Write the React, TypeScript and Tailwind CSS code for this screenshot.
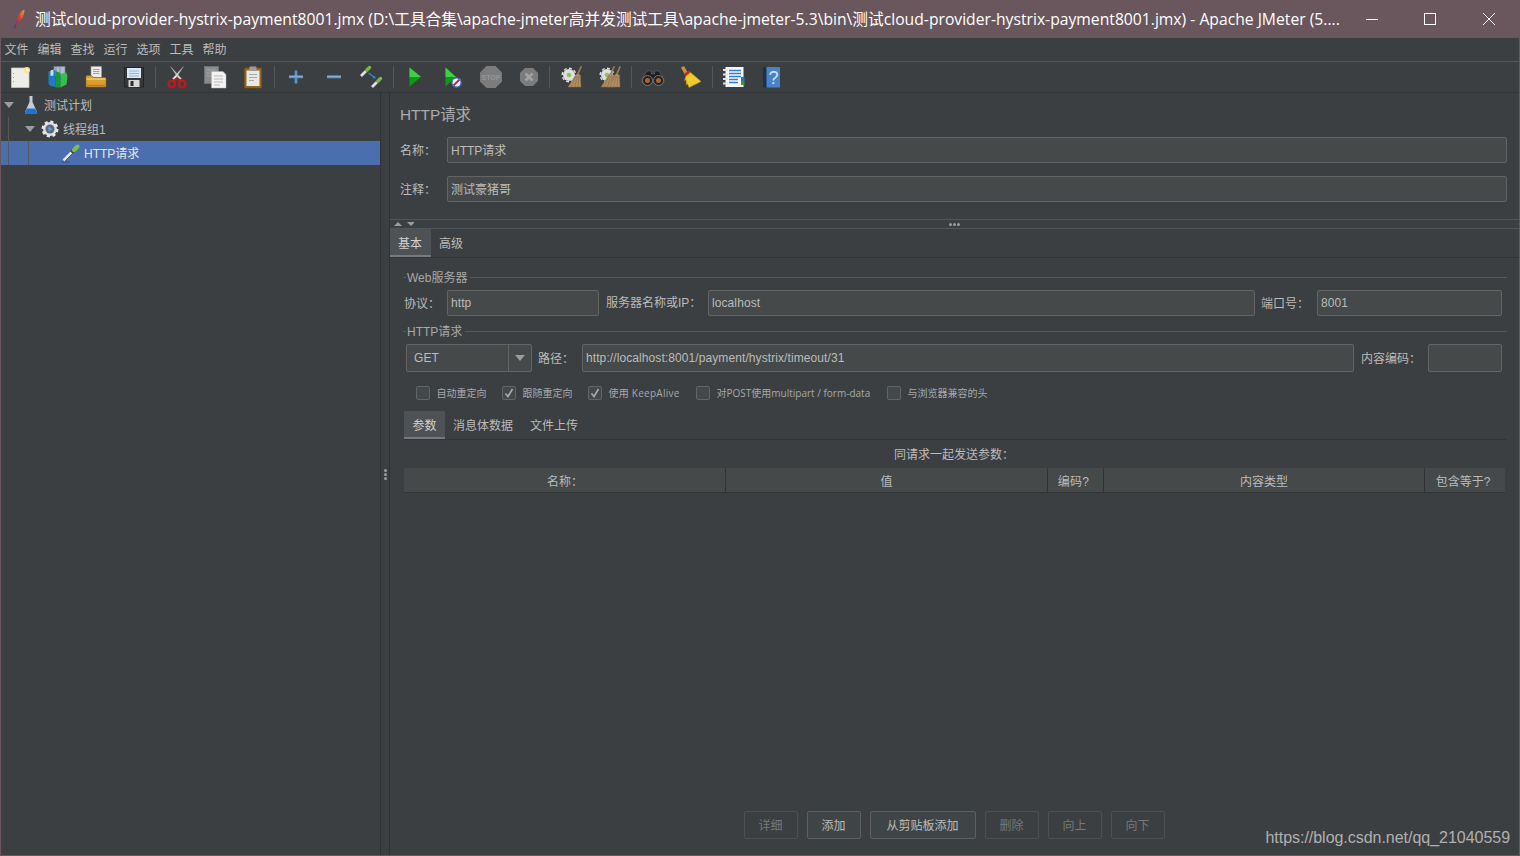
import React from "react";

const FONT = "font-['Liberation_Sans','Noto_Sans_CJK_SC',sans-serif]";

function Sep({ ml = "" }: { ml?: string }) {
  return <div className={`w-px h-[22px] shrink-0 bg-[#55595b] ${ml}`} />;
}

function Tb({ w, children }: { w: number; children: React.ReactNode }) {
  return (
    <div className="flex items-center justify-center h-full shrink-0" style={{ width: w }}>
      {children}
    </div>
  );
}

const S = ({ children }: { children: React.ReactNode }) => (
  <svg width="24" height="24" viewBox="0 0 24 24">{children}</svg>
);

const IconNew = () => (
  <S>
    <path d="M3.500 3h15.500l2 2v17.500H3.500z" fill="#efeee6" stroke="#c9c6ba" strokeWidth=".8" />
    <circle cx="19" cy="5" r="3" fill="#f7e38a" />
    <circle cx="19" cy="5" r="1.500" fill="#fff6c4" />
    <path d="M5.500 8v.8M5.500 12v.8M5.500 16v.8" stroke="#8c8c8c" />
  </S>
);
const IconTemplates = () => (
  <S>
    <rect x="8" y="1.500" width="11" height="9" fill="#aebdc8" stroke="#6d8090" strokeWidth=".7" />
    <path d="M10 1.500v9M14 1.500v9" stroke="#6d8090" strokeWidth=".7" />
    <path d="M2.500 6.500l7-1.500v17l-5-1-2-2z" fill="#1c7cc4" />
    <path d="M4.500 5.500l3-1v6l-3 .5z" fill="#cfdbe3" />
    <path d="M9.500 6l5 2v14.500h-5z" fill="#169a3c" />
    <path d="M14.500 9l6-1.500q1.500 3 .5 8l-.5 4-6 3z" fill="#34bf4e" />
  </S>
);
const IconOpen = () => (
  <S>
    <path d="M7 1.500h10.500v11H7z" fill="#ececec" stroke="#a0a0a0" strokeWidth=".6" />
    <path d="M9 4.500h6.500M9 6.500h6.500M9 8.500h6.500" stroke="#a2a2a2" />
    <path d="M2 11.500q0-1 1-1h4.500l2 2H21q1 0 1 1v7.500a1 1 0 01-1 1H3a1 1 0 01-1-1z" fill="#dc9d2f" stroke="#8f6414" strokeWidth=".6" />
    <path d="M2.500 14h19" stroke="#f4ce74" strokeWidth="1.400" />
    <path d="M3 20.500h18" stroke="#b97f1e" strokeWidth="1.400" />
  </S>
);
const IconSave = () => (
  <S>
    <path d="M2.500 2.500h19v19.500H2.500z" fill="#35383b" stroke="#1e1e1e" strokeWidth=".8" />
    <rect x="5" y="3" width="14" height="10" fill="#dbe8f5" />
    <path d="M7 6h10M7 8.500h10M7 11h10" stroke="#93b5d8" />
    <rect x="6.500" y="15" width="11" height="7" fill="#d7d7d7" />
    <rect x="8.500" y="16" width="3" height="5" fill="#2e2e2e" />
  </S>
);
const IconCut = () => (
  <S>
    <path d="M5.500 1.500l9 13.500 2-1.500z" fill="#dadada" stroke="#8f8f8f" strokeWidth=".5" />
    <path d="M18.500 1.500l-9 13.500-2-1.500z" fill="#ededed" stroke="#8f8f8f" strokeWidth=".5" />
    <circle cx="6.800" cy="19" r="3.300" fill="none" stroke="#cc1616" strokeWidth="2.200" />
    <circle cx="17.200" cy="19" r="3.300" fill="none" stroke="#cc1616" strokeWidth="2.200" />
    <path d="M8.500 16.500l2.500-3M15.500 16.500l-2.500-3" stroke="#cc1616" strokeWidth="2" />
  </S>
);
const IconCopy = () => (
  <S>
    <rect x="1.500" y="1.500" width="14" height="17" fill="#8a8c8c" stroke="#767878" strokeWidth=".7" />
    <path d="M3.500 5h10M3.500 8h10M3.500 11h10" stroke="#a2a4a4" />
    <path d="M8.500 6.500H20l3 3V23H8.500z" fill="#f3f3f3" stroke="#b0b0b0" strokeWidth=".5" />
    <path d="M11 11h9M11 14h9M11 17h9M11 20h6" stroke="#b9b9b9" />
  </S>
);
const IconPaste = () => (
  <S>
    <rect x="3.500" y="3" width="17" height="20" rx="1" fill="#96661f" stroke="#7a5216" strokeWidth=".6" />
    <rect x="5.500" y="5.500" width="13" height="15.500" fill="#e9e9e3" />
    <rect x="8.500" y="1.500" width="7" height="4.500" rx="1" fill="#9b9b9b" />
    <path d="M8 9.500h8M8 12.500h8M8 15.500h5" stroke="#a9a9a9" />
  </S>
);
const IconPlus = () => (
  <S>
    <path d="M12 5.500v13M5 12h14" stroke="#5b95d0" strokeWidth="2.600" />
    <path d="M5 11.200h14" stroke="#a3c6ea" strokeWidth=".8" />
  </S>
);
const IconMinus = () => (
  <S>
    <path d="M5 12h14" stroke="#5b95d0" strokeWidth="2.600" />
    <path d="M5 11.200h14" stroke="#a3c6ea" strokeWidth=".8" />
  </S>
);
const Dropper = ({ x, y }: { x: number; y: number }) => (
  <g transform={`translate(${x} ${y})`}>
    <path d="M0 10l5-5" stroke="#e2e2e2" strokeWidth="2.600" />
    <path d="M5 5l1-1" stroke="#5f5f5f" strokeWidth="3" />
    <path d="M6 4l2.500-2.500" stroke="#78b84c" strokeWidth="3.400" strokeLinecap="round" />
  </g>
);
const IconToggle = () => (
  <S>
    <Dropper x={1} y={1} />
    <Dropper x={12} y={12} />
    <path d="M8.500 8l6 4.500" stroke="#3b84cc" strokeWidth="1.400" />
    <path d="M16 13.500l-3.500-.2 2-2.600z" fill="#3b84cc" />
  </S>
);
const IconPlay = () => (
  <S>
    <path d="M6.500 2.500L18 12 6.500 21.500z" fill="#0e9a12" />
    <path d="M6.500 2.500L18 12H6.500z" fill="#3fd043" />
  </S>
);
const IconPlayNo = () => (
  <S>
    <path d="M4.500 2.500L15 12 4.500 21.500z" fill="#0e9a12" />
    <path d="M4.500 2.500L15 12H4.500z" fill="#3fd043" />
    <circle cx="15.500" cy="17.500" r="4.600" fill="#e8eef8" stroke="#3b6fc4" strokeWidth="1.200" />
    <path d="M12.500 20.500l6-6" stroke="#d42020" strokeWidth="1.800" />
  </S>
);
const IconStop = () => (
  <S>
    <path d="M7.500 1h9L23 7.500v9L16.500 23h-9L1 16.500v-9z" fill="#7c7c7c" />
    <text x="12" y="15" textAnchor="middle" fontSize="8" fontWeight="700" textLength="19" lengthAdjust="spacingAndGlyphs" fill="#969696" fontFamily="Liberation Sans">STOP</text>
  </S>
);
const IconShut = () => (
  <S>
    <path d="M8 3h8l5 5v8l-5 5H8l-5-5V8z" fill="#7c7c7c" />
    <path d="M8.500 8.500l7 7M15.500 8.500l-7 7" stroke="#a2a2a2" strokeWidth="2.800" />
  </S>
);
const Gear = ({ cx, cy }: { cx: number; cy: number }) => (
  <g>
    <circle cx={cx} cy={cy} r="6" fill="#dedede" />
    <circle cx={cx} cy={cy} r="6.800" fill="none" stroke="#dedede" strokeWidth="1.400" strokeDasharray="3 2.300" />
    <circle cx={cx} cy={cy} r="2.300" fill="#86c850" />
  </g>
);
const Brush = ({ x, y = 0 }: { x: number; y?: number }) => (
  <g transform={`translate(${x} ${y})`}>
    <path d="M12.500 1l1.500.6-3.500 8-1.500-.6z" fill="#a07c50" />
    <path d="M9 8.500l3.500 1.500.5 12H0z" fill="#b28e64" stroke="#866844" strokeWidth=".5" />
    <path d="M8 11l-5 11M9.500 11l-3 11M11 11l-1 11" stroke="#8a6a44" strokeWidth=".6" />
  </g>
);
const IconClear = () => (
  <S>
    <Gear cx={10} cy={10} />
    <Brush x={9} />
  </S>
);
const IconClearAll = () => (
  <S>
    <Gear cx={9} cy={10} />
    <Brush x={3} />
    <Brush x={9} />
  </S>
);
const IconBinoc = () => (
  <S>
    <path d="M6 6h4.500v3h3V6H18l5 8.500v3H1v-3z" fill="#1e1e1e" stroke="#777" strokeWidth=".5" />
    <circle cx="6.500" cy="15.500" r="5" fill="#222" stroke="#8c8c8c" strokeWidth=".8" />
    <circle cx="17.500" cy="15.500" r="5" fill="#222" stroke="#8c8c8c" strokeWidth=".8" />
    <circle cx="6.500" cy="15.500" r="2.500" fill="#ad6430" />
    <circle cx="17.500" cy="15.500" r="2.500" fill="#ad6430" />
  </S>
);
const IconBroom = () => (
  <S>
    <path d="M2 2.500l3-1.500 4 7-3 2z" fill="#c99338" />
    <path d="M5.500 8.500l4.500-3 1.500 2-4.500 3.200z" fill="#d42020" />
    <path d="M7 11l4.500-3.500 10.500 9-12 6-1.500-4-1 1.500-.5-5.500-1.500 1z" fill="#f0cd2c" stroke="#bf9a18" strokeWidth=".6" />
  </S>
);
const IconFunc = () => (
  <S>
    <rect x="3.500" y="2" width="18" height="20" fill="#fafafa" />
    <path d="M7 5.500h12M7 8.500h12M7 11.500h12M7 14.500h9M7 17.500h9" stroke="#2f7fe0" strokeWidth="1.300" />
    <path d="M1 5h5M1 9.500h5M1 14h5M1 18.500h5" stroke="#e2e2e2" strokeWidth="2" />
    <rect x="19" y="12" width="3.500" height="4" fill="#3070c0" />
    <rect x="19" y="16" width="3.500" height="4" fill="#3a9a3a" />
  </S>
);
const IconHelp = () => (
  <S>
    <rect x="3" y="2" width="5" height="20.500" rx="1" fill="#1d3144" />
    <rect x="6.500" y="2" width="13.500" height="20.500" fill="#4a82c8" />
    <text x="13.500" y="18.500" textAnchor="middle" fontSize="18" fill="#d5e4f6" fontFamily="Liberation Sans">?</text>
  </S>
);

const Arrow = () => (
  <svg width="10" height="6" viewBox="0 0 10 6"><path d="M0 0h10L5 6z" fill="#9a9c9e" /></svg>
);

const Flask = () => (
  <svg width="16" height="20" viewBox="0 0 16 20">
    <path d="M6.500 1h3v6l4.500 10q.5 2-1.500 2h-9Q1.500 19 2 17l4.500-10z" fill="#c6cdd8" />
    <path d="M4.200 13.500h7.600l2.200 3.500q.5 2-1.500 2h-9Q1.500 19 2 17z" fill="#1c74d0" />
  </svg>
);
const TreeGear = () => (
  <svg width="20" height="20" viewBox="0 0 20 20">
    <circle cx="10" cy="10" r="7" fill="#dcdcdc" stroke="#e6e6e6" strokeWidth="3" strokeDasharray="3 2.500" />
    <circle cx="10" cy="10" r="4.500" fill="#5a6b80" />
    <path d="M8.500 7.500l4 2.500-4 2.500z" fill="#5aa0e8" />
  </svg>
);
const TreeDropper = () => (
  <svg width="20" height="20" viewBox="0 0 20 20">
    <path d="M1 19h8" stroke="#3d4f70" strokeWidth="1" />
    <path d="M2.500 17.500l8-8" stroke="#e4e4e4" strokeWidth="2.600" />
    <path d="M4 18l8-8" stroke="#555" strokeWidth=".8" />
    <path d="M10.500 9.500l2-2" stroke="#4a4a4a" strokeWidth="3.400" />
    <path d="M13 7l3.500-3.500" stroke="#7cc24a" strokeWidth="4" strokeLinecap="round" />
  </svg>
);

function Input({ className, value, cjk }: { className: string; value: string; cjk?: boolean }) {
  return (
    <div className={`flex items-center pl-[3px] bg-[#45494a] border border-[#646464] rounded-[2px] text-[12px] text-[#bbbbbb] ${cjk ? "pt-[2px]" : "tracking-[0.09px]"} ${className}`}>
      {value}
    </div>
  );
}

function Section({ title, className }: { title: string; className: string }) {
  return (
    <div className={`flex items-center gap-px text-[12px] text-[#a6a8aa] ${className}`}>
      <div className="w-[3px] h-px bg-[#55595b]" />
      <span className="pt-[2px]">{title}</span>
      <div className="flex-1 h-px bg-[#55595b] ml-[2px]" />
    </div>
  );
}

function Check({ label, checked, w, text = "" }: { label: string; checked?: boolean; w: string; text?: string }) {
  return (
    <div className={`flex items-center shrink-0 ${w}`}>
      <div className="w-[14px] h-[14px] mr-[6.5px] border border-[#646464] rounded-[2px] bg-[#43494a] flex items-center justify-center">
        {checked && (
          <svg width="10" height="10" viewBox="0 0 10 10"><path d="M1.500 5.500L4 8.500 8.500 1" stroke="#a9abad" strokeWidth="1.600" fill="none" /></svg>
        )}
      </div>
      <span className={`text-[10px] text-[#a6a8aa] whitespace-nowrap font-['Open_Sans','Noto_Sans_CJK_SC',sans-serif] ${text}`}>{label}</span>
    </div>
  );
}

function Btn({ label, w, on }: { label: string; w: string; on?: boolean }) {
  return (
    <div className={`h-[28px] flex items-center justify-center pt-[2px] pr-[1px] rounded-[2px] border text-[12px] ${w} ${on ? "border-[#5e6060] bg-[#3f4547] text-[#bbbbbb]" : "border-[#4d5052] text-[#777777]"}`}>
      {label}
    </div>
  );
}

function Th({ label, w, last }: { label: string; w: string; last?: boolean }) {
  return (
    <div className={`flex items-center justify-center h-full pt-[3px] text-[12px] text-[#bbbbbb] ${w} ${last ? "" : "border-r border-[#323232]"}`}>
      {label}
    </div>
  );
}

export default function App() {
  return (
    <div className={`w-[1520px] h-[856px] relative overflow-hidden flex flex-col bg-[#3c3f41] border-x border-b border-[#6a575d] ${FONT}`}>
      {/* Title bar */}
      <div className="h-[38px] shrink-0 bg-[#6a575d] flex items-center text-white font-['Open_Sans','Noto_Sans_CJK_SC',sans-serif] text-[15.7px] -mx-px">
        <svg className="ml-[13px] shrink-0" width="12" height="20" viewBox="0 0 12 20">
          <defs>
            <linearGradient id="fe" x1="1" y1="0" x2="0" y2="1">
              <stop offset="0" stopColor="#f0a030" />
              <stop offset=".45" stopColor="#d8402c" />
              <stop offset=".75" stopColor="#a02a70" />
              <stop offset="1" stopColor="#3c2a80" />
            </linearGradient>
          </defs>
          <path d="M11.500.5Q6 3 3.500 11L1 19.500h.8L5 13q4-2 5-5.500Q11.500 4 11.500.5z" fill="url(#fe)" />
        </svg>
        <span className="ml-[10px] pt-[2px] w-[1305px] shrink-0 whitespace-nowrap overflow-hidden">测试cloud-provider-hystrix-payment8001.jmx (D:\工具合集\apache-jmeter高并发测试工具\apache-jmeter-5.3\bin\测试cloud-provider-hystrix-payment8001.jmx) - Apache JMeter (5....</span>
        <div className="flex-1 flex items-center">
          <div className="ml-[26px] w-[12px] h-px bg-white" />
          <div className="ml-[46px] w-[12px] h-[12px] border border-white" />
          <svg className="ml-[47px]" width="12" height="12" viewBox="0 0 12 12"><path d="M0 0l12 12M12 0L0 12" stroke="#fff" /></svg>
        </div>
      </div>

      {/* Menu */}
      <div className="h-[24px] shrink-0 flex items-center gap-[9px] pl-[3.500px] text-[12px] text-[#bbbbbb] border-b border-[#515658]">
        {["文件", "编辑", "查找", "运行", "选项", "工具", "帮助"].map((m) => (
          <span key={m}>{m}</span>
        ))}
      </div>

      {/* Toolbar */}
      <div className="h-[31px] shrink-0 flex items-center border-b border-[#323537]">
        <Tb w={38}><IconNew /></Tb>
        <Tb w={37}><IconTemplates /></Tb>
        <Tb w={40}><IconOpen /></Tb>
        <Tb w={36}><IconSave /></Tb>
        <Sep ml="ml-[3px]" />
        <Tb w={42}><IconCut /></Tb>
        <Tb w={34}><IconCopy /></Tb>
        <Tb w={42}><IconPaste /></Tb>
        <Sep />
        <Tb w={42}><IconPlus /></Tb>
        <Tb w={34}><IconMinus /></Tb>
        <Tb w={42}><IconToggle /></Tb>
        <Sep />
        <Tb w={42}><IconPlay /></Tb>
        <Tb w={34}><IconPlayNo /></Tb>
        <Tb w={42}><IconStop /></Tb>
        <Tb w={34}><IconShut /></Tb>
        <Sep ml="ml-[3px]" />
        <Tb w={42}><IconClear /></Tb>
        <Tb w={36}><IconClearAll /></Tb>
        <Sep ml="ml-[3px]" />
        <Tb w={42}><IconBinoc /></Tb>
        <Tb w={34}><IconBroom /></Tb>
        <Sep ml="ml-[4px]" />
        <Tb w={42}><IconFunc /></Tb>
        <Tb w={34}><IconHelp /></Tb>
      </div>

      {/* Body */}
      <div className="flex-1 flex min-h-0">
        {/* Tree */}
        <div className="w-[379px] shrink-0 text-[12px] text-[#bbbbbb]">
          <div className="h-[24px] flex items-center">
            <div className="ml-[3px] w-[10px] flex"><Arrow /></div>
            <div className="ml-[9px] w-[16px] flex"><Flask /></div>
            <span className="ml-[5px] pt-[2px]">测试计划</span>
          </div>
          <div className="h-[24px] flex items-center">
            <div className="ml-[7px] w-px h-full bg-[#55595b]" />
            <div className="ml-[16px] w-[10px] flex"><Arrow /></div>
            <div className="ml-[5px] w-[20px] flex"><TreeGear /></div>
            <span className="ml-[3px] pt-[2px]">线程组1</span>
          </div>
          <div className="h-[24px] flex items-center bg-[#4b6eaf] text-[#e6e6e6]">
            <div className="ml-[7px] w-px h-full bg-[#55595b]" />
            <div className="ml-[19px] w-px h-full bg-[#55595b]" />
            <div className="ml-[32px] w-[20px] flex"><TreeDropper /></div>
            <span className="ml-[3px] pt-[2px]">HTTP请求</span>
          </div>
        </div>

        {/* Split divider */}
        <div className="w-[10px] shrink-0 border-x border-[#2f3234] flex flex-col items-center justify-center gap-[1px]">
          <div className="w-[3px] h-[3px] rounded-full bg-[#9a9c9e]" />
          <div className="w-[3px] h-[3px] rounded-full bg-[#9a9c9e]" />
          <div className="w-[3px] h-[3px] rounded-full bg-[#9a9c9e]" />
        </div>

        {/* Right */}
        <div className="flex-1 min-w-0 flex flex-col text-[12px] text-[#bbbbbb]">
          {/* Header */}
          <div className="pl-[10px] pr-[12px] h-[126px] shrink-0">
            <div className="h-[44px] flex items-center text-[15.4px] text-[#a9abad]">HTTP请求</div>
            <div className="h-[26px] flex items-center">
              <span className="w-[47px] pt-[2px]">名称：</span>
              <Input className="flex-1 h-full" value="HTTP请求" cjk />
            </div>
            <div className="h-[26px] mt-[13px] flex items-center">
              <span className="w-[47px] pt-[2px]">注释：</span>
              <Input className="flex-1 h-full" value="测试豪猪哥" cjk />
            </div>
          </div>

          {/* Horizontal splitter */}
          <div className="h-[10px] shrink-0 flex items-center border-y border-[#515658]">
            <svg className="ml-[4px]" width="20" height="6" viewBox="0 0 20 6">
              <path d="M0 5l4-4 4 4z" fill="#9a9c9e" />
              <path d="M13 1h8l-4 4z" fill="#9a9c9e" />
            </svg>
            <div className="flex-1 flex justify-center gap-[1px] pr-[24px]">
              <div className="w-[3px] h-[3px] rounded-full bg-[#9a9c9e]" />
              <div className="w-[3px] h-[3px] rounded-full bg-[#9a9c9e]" />
              <div className="w-[3px] h-[3px] rounded-full bg-[#9a9c9e]" />
            </div>
          </div>

          {/* Tabs */}
          <div className="h-[29px] shrink-0 flex items-stretch border-b border-[#323537]">
            <div className="w-[41px] flex items-center justify-center pt-[3px] pr-[1px] bg-[#4e5254] border-b-[2px] border-[#747a80] text-[#d0d0d0]">基本</div>
            <div className="w-[41px] flex items-center justify-center pt-[2px] pr-[1px]">高级</div>
          </div>

          {/* Panel */}
          <div className="flex-1 min-h-0 flex flex-col pl-[14px] pr-[13px]">
            <Section title="Web服务器" className="h-[14px] mt-[12px] -ml-[1px] mr-[-1px]" />
            <div className="h-[26px] mt-[6px] flex items-center mr-[4px]">
              <span className="w-[43px] pt-[1px]">协议：</span>
              <Input className="w-[152px] h-full" value="http" />
              <span className="ml-[7px] w-[102px]">服务器名称或IP：</span>
              <Input className="w-[547px] h-full" value="localhost" />
              <span className="ml-[6px] w-[56px] pt-[1px]">端口号：</span>
              <Input className="flex-1 h-full" value="8001" />
            </div>
            <Section title="HTTP请求" className="h-[14px] mt-[8px] -ml-[1px] mr-[-1px]" />
            <div className="h-[28px] mt-[6px] flex items-center ml-[2px] mr-[4px]">
              <div className="w-[126px] h-full flex rounded-[2px] border border-[#646464] bg-[#45494a]">
                <div className="flex-1 flex items-center pl-[7px] border-r border-[#646464] tracking-[0.09px]">GET</div>
                <div className="w-[22px] flex items-center justify-center"><Arrow /></div>
              </div>
              <span className="ml-[6px] w-[44px] pt-[2px]">路径：</span>
              <Input className="w-[772px] h-full" value="http://localhost:8001/payment/hystrix/timeout/31" />
              <span className="ml-[7px] w-[67px] pt-[2px]">内容编码：</span>
              <Input className="flex-1 h-full" value="" />
            </div>
            <div className="h-[14px] mt-[14px] flex items-center pl-[12px]">
              <Check label="自动重定向" w="w-[86px]" />
              <Check label="跟随重定向" checked w="w-[86px]" />
              <Check label="使用 KeepAlive" checked w="w-[108px]" text="tracking-[0.25px]" />
              <Check label="对POST使用multipart / form-data" w="w-[191px]" />
              <Check label="与浏览器兼容的头" w="w-[110px]" />
            </div>
            <div className="h-[29px] mt-[11px] flex items-stretch border-b border-[#323537]">
              <div className="w-[41px] flex items-center justify-center pt-[3px] bg-[#4e5254] border-b-[2px] border-[#747a80] text-[#d0d0d0]">参数</div>
              <div className="ml-[8px] flex items-center pt-[2px]">消息体数据</div>
              <div className="ml-[17px] flex items-center pt-[2px]">文件上传</div>
            </div>
            <div className="h-[28px] flex items-center justify-center pt-[2px] pr-[2px]">同请求一起发送参数：</div>
            <div className="h-[25px] flex items-center bg-[#45494a] border-b border-[#323537] mr-[1px]">
              <Th label="名称：" w="w-[322px] pl-[1px]" />
              <Th label="值" w="w-[322px]" />
              <Th label="编码?" w="w-[56px] pr-[4px] tracking-[0.3px]" />
              <Th label="内容类型" w="w-[321px]" />
              <Th label="包含等于?" w="flex-1 pr-[4px]" last />
            </div>
            <div className="flex-1" />
            <div className="h-[28px] mb-[16px] flex items-center gap-[9px] ml-[340px]">
              <Btn label="详细" w="w-[54px]" />
              <Btn label="添加" w="w-[54px]" on />
              <Btn label="从剪贴板添加" w="w-[106px]" on />
              <Btn label="删除" w="w-[54px]" />
              <Btn label="向上" w="w-[54px]" />
              <Btn label="向下" w="w-[54px]" />
            </div>
          </div>
        </div>
      </div>

      {/* Watermark */}
      <div className="absolute right-[9px] bottom-[7px] text-[16px] leading-[20px] text-[#b0b0b0] tracking-[-0.03px]">https://blog.csdn.net/qq_21040559</div>
    </div>
  );
}
